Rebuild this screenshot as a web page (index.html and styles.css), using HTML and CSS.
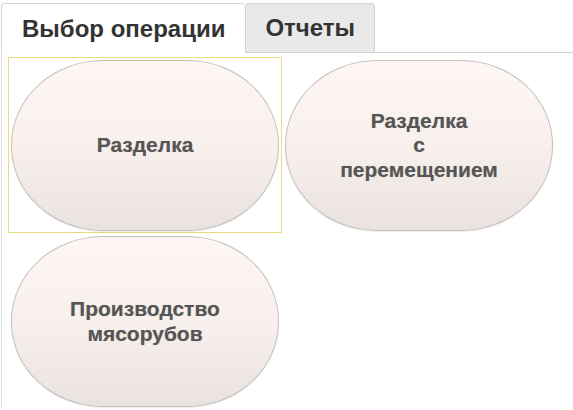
FILE: index.html
```html
<!DOCTYPE html>
<html lang="ru">
<head>
<meta charset="utf-8">
<link rel="stylesheet" href="styles.css">
</head>
<body>
<div class="tabs">
  <div class="tab active">Выбор операции</div>
  <div class="tab">Отчеты</div>
</div>
<div class="panel">
  <div class="grid">
    <div class="cell selected"><div class="oval"><span>Разделка</span></div></div>
    <div class="cell"><div class="oval"><span>Разделка<br>с<br>перемещением</span></div></div>
    <div class="cell"><div class="oval"><span>Производство<br>мясорубов</span></div></div>
  </div>
</div>
</body>
</html>
```

FILE: styles.css
```css
html, body {
  margin: 0;
  padding: 0;
  background: #ffffff;
  font-family: "Liberation Sans", Arial, sans-serif;
  overflow: hidden;
}

.tabs {
  display: flex;
  padding: 3px 0 0 1px;
  position: relative;
  z-index: 1;
}

.tab {
  height: 49px;
  box-sizing: border-box;
  padding: 0 19px;
  display: flex;
  align-items: center;
  font-weight: bold;
  font-size: 24px;
  color: #333333;
  border: 1px solid #d4d4d4;
  border-bottom: none;
  border-radius: 4px 4px 0 0;
  background: #e9e9e9;
}

.tab.active {
  background: #ffffff;
  height: 50px;
  margin-bottom: -1px;
  border-right: none;
  padding: 0 20px;
}

.panel {
  border-top: 1px solid #d0d0d0;
  border-left: 1px solid #dedede;
  margin-left: 1px;
  height: 357px;
  box-sizing: border-box;
}

.grid {
  display: grid;
  grid-template-columns: 274px 274px;
  grid-auto-rows: 176px;
  padding: 4px 0 0 6px;
}

.cell {
  box-sizing: border-box;
  border: 1px solid transparent;
  padding: 2px;
}

.cell.selected {
  border-color: #e8dc78;
}

.oval {
  height: 171px;
  width: 268px;
  box-sizing: border-box;
  border: 1px solid #c4bebb;
  border-radius: 92px / 85px;
  background: linear-gradient(to bottom, #fdf6f3 0%, #f8f0ec 50%, #eae2df 100%);
  display: flex;
  align-items: center;
  justify-content: center;
  text-align: center;
  box-shadow: 0 1px 1px rgba(0, 0, 0, 0.08);
}

.oval span {
  font-weight: bold;
  font-size: 21px;
  line-height: 24.5px;
  color: #555555;
  text-shadow: 0 0 1px rgba(0, 0, 0, 0.25);
}
```
